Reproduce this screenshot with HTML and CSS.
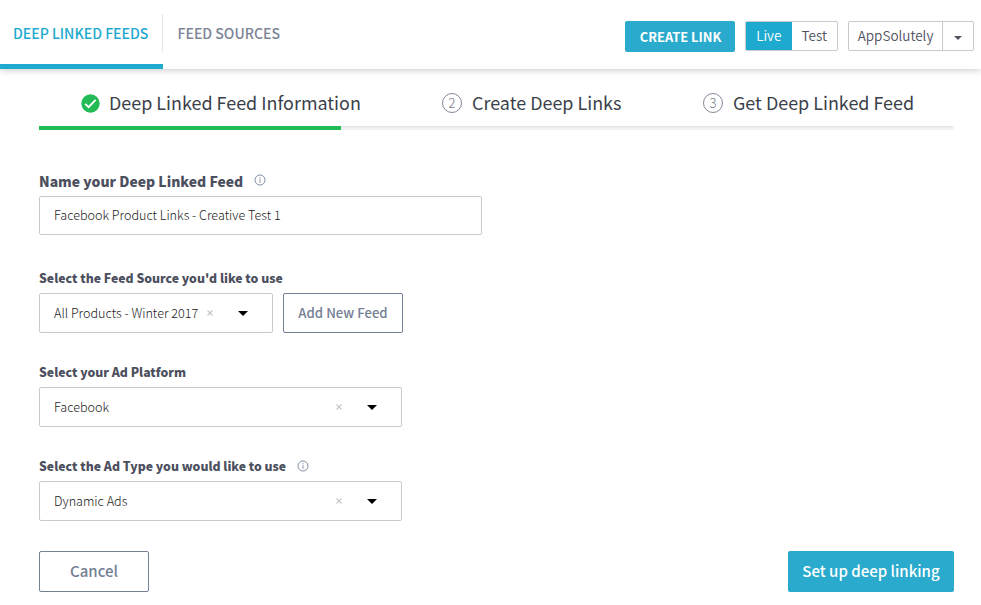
FILE: index.html
```html
<!DOCTYPE html>
<html lang="en">
<head>
<meta charset="utf-8">
<title>Deep Linked Feeds</title>
<link rel="stylesheet" href="styles.css">
</head>
<body>
<header class="topbar">
  <nav class="tabs">
    <a class="tab active">DEEP LINKED FEEDS</a>
    <a class="tab">FEED SOURCES</a>
  </nav>
  <div class="tools">
    <button class="create">CREATE LINK</button>
    <div class="group toggle"><span class="on">Live</span><span>Test</span></div>
    <div class="group account"><span class="name">AppSolutely</span><span class="drop"><svg width="8" height="4" viewBox="0 0 8 4"><path d="M0 0h8L4 4z" fill="#50525f"/></svg></span></div>
  </div>
</header>
<main>
  <ol class="steps">
    <li class="first"><svg class="check" width="19" height="19" viewBox="0 0 18 18"><circle cx="9" cy="9" r="8.700" fill="#23bb55"/><path d="M4 9.300l3.200 3.100 6.600-6.800" fill="none" stroke="#fff" stroke-width="1.8"/></svg><span>Deep Linked Feed Information</span></li>
    <li class="second"><i>2</i><span>Create Deep Links</span></li>
    <li class="third"><i>3</i><span>Get Deep Linked Feed</span></li>
  </ol>
  <div class="progress"><div class="done"></div></div>
  <form>
    <div class="label big"><span>Name your Deep Linked Feed</span><svg class="info" width="12" height="12" viewBox="0 0 12 12"><circle cx="6" cy="6" r="5" fill="none" stroke="#8290a2"/><path d="M6 5.200v3.600M6 3.100v1.200" stroke="#8290a2"/></svg></div>
    <div class="box input"><span class="value">Facebook Product Links - Creative Test 1</span></div>
    <div class="label l2"><span>Select the Feed Source you'd like to use</span></div>
    <div class="row">
      <div class="box select short"><span class="value">All Products - Winter 2017</span><svg class="clear" width="6" height="6" viewBox="0 0 6 6"><path d="M.5.5l5 5M5.500.500l-5 5" stroke="#c4c6ca" stroke-width="1.1"/></svg><svg class="caret" width="10" height="5" viewBox="0 0 10 5"><path d="M0 0h10L5 5z"/></svg></div>
      <button type="button" class="outline add">Add New Feed</button>
    </div>
    <div class="label l3"><span>Select your Ad Platform</span></div>
    <div class="box select"><span class="value">Facebook</span><svg class="clear" width="6" height="6" viewBox="0 0 6 6"><path d="M.5.5l5 5M5.500.500l-5 5" stroke="#c4c6ca" stroke-width="1.1"/></svg><svg class="caret" width="10" height="5" viewBox="0 0 10 5"><path d="M0 0h10L5 5z"/></svg></div>
    <div class="label l3"><span>Select the Ad Type you would like to use</span><svg class="info" width="12" height="12" viewBox="0 0 12 12"><circle cx="6" cy="6" r="5" fill="none" stroke="#8290a2"/><path d="M6 5.200v3.600M6 3.100v1.200" stroke="#8290a2"/></svg></div>
    <div class="box select"><span class="value">Dynamic Ads</span><svg class="clear" width="6" height="6" viewBox="0 0 6 6"><path d="M.5.5l5 5M5.500.500l-5 5" stroke="#c4c6ca" stroke-width="1.1"/></svg><svg class="caret" width="10" height="5" viewBox="0 0 10 5"><path d="M0 0h10L5 5z"/></svg></div>
    <div class="actions">
      <button type="button" class="outline cancel">Cancel</button>
      <button type="button" class="submit">Set up deep linking</button>
    </div>
  </form>
</main>
</body>
</html>
```
FILE: styles.css
```css
* { box-sizing: border-box; }
body { margin: 0; background: #fff; color: #50525f; font-family: "Noto Sans CJK SC", "Open Sans", sans-serif; white-space: nowrap; }
button { font-family: inherit; padding: 0; border: 0; border-radius: 2px; }
.topbar { height: 69px; display: flex; justify-content: space-between; box-shadow: 0 1px 7px rgba(0,0,0,.22); }
.tabs { display: flex; }
.tab { height: 69px; padding: 0 14px 0 14.5px; line-height: 66px; font-size: 14.05px; font-weight: 500; color: #7c8497; }
.tab.active { width: 163px; padding-left: 13px; color: #1eaacf; border-bottom: 5px solid #1eaacf; background: linear-gradient(#e6e6e8,#e6e6e8) 162px 14px / 1px 38px no-repeat; }
.tools { display: flex; gap: 10px; padding: 21px 7px 0 0; }
.create { width: 110px; height: 31px; background: #2aabcd; color: #fff; font-size: 12.9px; font-weight: 700; line-height: 31px; padding-left: 1px; }
.group { height: 30px; display: flex; border: 1px solid #c9cacd; border-radius: 2px; font-size: 13.5px; font-weight: 350; line-height: 27px; text-align: center; }
.toggle { width: 93px; }
.toggle span { flex: 1; }
.toggle .on { background: #1eaacf; color: #fff; }
.account { width: 126px; }
.name { width: 94px; border-right: 1px solid #c9cacd; }
.drop { flex: 1; display: flex; align-items: center; justify-content: center; padding-top: 3px; }
main { padding: 17px 27px 0 39px; }
.steps { list-style: none; margin: 0; padding: 0; height: 40px; display: flex; font-size: 17.95px; color: #3b3f4a; }
.steps li { display: flex; align-items: center; height: 34px; }
.steps span { line-height: 30px; padding-bottom: 2px; }
.first { width: 403px; padding-left: 42px; }
.second { width: 261px; }
.check { margin-right: 9px; }
.steps i { width: 20px; height: 20px; margin-right: 10px; border: 1px solid #85889a; border-radius: 50%; font-size: 13px; font-weight: 300; font-style: normal; line-height: 18px; text-align: center; color: #777b8b; }
.progress { height: 4px; background: linear-gradient(#e2e2e7, #f0f0f5 50%); border-radius: 2px; }
.done { width: 302px; height: 4px; background: #23bb55; }
.label { display: flex; align-items: center; height: 20px; margin-bottom: 5px; font-size: 12.25px; font-weight: 900; color: #4c4f5e; }
.label span { line-height: 20px; }
.big { margin-top: 41px; font-size: 13.95px; }
.big .info { margin-bottom: 2px; }
.l2 { margin-top: 33px; }
.l2 span, .l3 span { line-height: 18px; }
.l3 { margin-top: 29px; }
.info { margin-left: 11px; }
.box { height: 40px; display: flex; align-items: center; padding-left: 14px; border: 1px solid #c9cacd; border-radius: 2px; font-size: 12.6px; font-weight: 300; color: #222; }
.input { width: 443px; height: 39px; }
.select { width: 363px; padding-right: 24px; }
.short { width: 234px; }
.value { flex: 1; padding-bottom: 2px; }
.clear { margin-right: 25px; }
.row { display: flex; gap: 10px; }
.outline { border: 1px solid #748094; background: #fff; color: #748094; font-weight: 500; }
.add { width: 120px; height: 40px; font-size: 13.2px; padding-bottom: 2px; }
.actions { display: flex; justify-content: space-between; margin-top: 30px; }
.cancel { width: 110px; height: 41px; font-size: 15px; padding-bottom: 2px; }
.submit { width: 166px; height: 41px; background: #2aabcd; color: #fff; font-size: 15px; font-weight: 500; padding-bottom: 2px; }
```
